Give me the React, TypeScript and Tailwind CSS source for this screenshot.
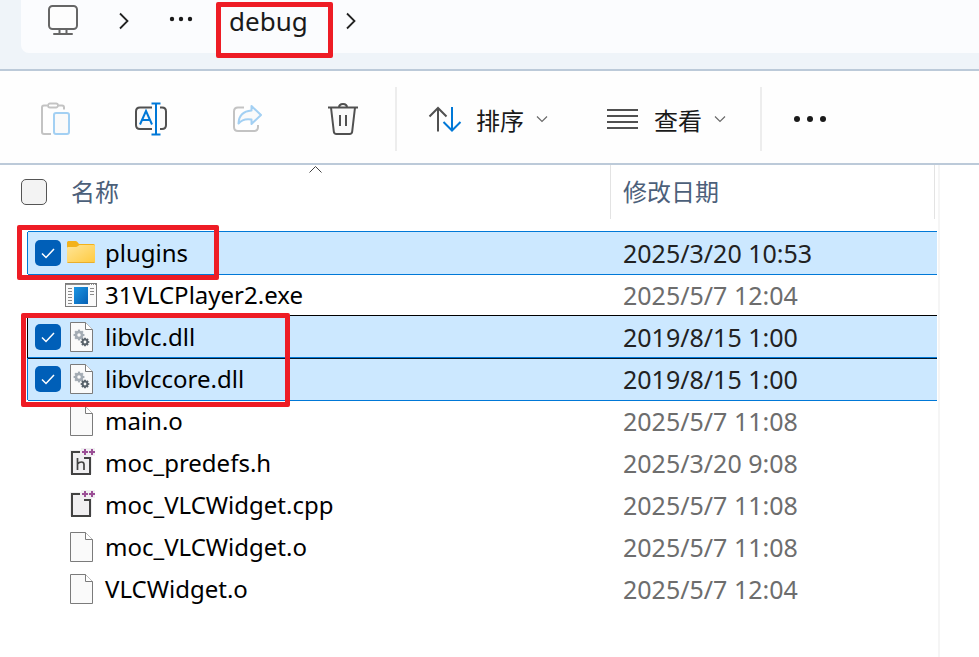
import type { ReactNode } from "react";

type IconKind = "folder" | "exe" | "dll" | "file" | "header" | "source";

interface FileRow {
  name: string;
  date: string;
  icon: IconKind;
  selected?: boolean;
  line?: string;
}

const BLUE_BOX =
  "bg-[#cce8ff] shadow-[-1px_0_0_#0078d7,0_-1px_0_#0078d7,0_1px_0_#0078d7]";
const FOCUS_BOX =
  "bg-[#cce8ff] shadow-[-1px_0_0_#000000,0_-1px_0_#000000,inset_0_-1px_0_#0078d7]";
const LAST_BOX =
  "bg-[#cce8ff] shadow-[-1px_0_0_#0078d7,inset_0_1px_0_#00192d,0_1px_0_#0078d7]";

const files: FileRow[] = [
  { name: "plugins", date: "2025/3/20 10:53", icon: "folder", selected: true, line: BLUE_BOX },
  { name: "31VLCPlayer2.exe", date: "2025/5/7 12:04", icon: "exe" },
  { name: "libvlc.dll", date: "2019/8/15 1:00", icon: "dll", selected: true, line: FOCUS_BOX },
  { name: "libvlccore.dll", date: "2019/8/15 1:00", icon: "dll", selected: true, line: LAST_BOX },
  { name: "main.o", date: "2025/5/7 11:08", icon: "file" },
  { name: "moc_predefs.h", date: "2025/3/20 9:08", icon: "header" },
  { name: "moc_VLCWidget.cpp", date: "2025/5/7 11:08", icon: "source" },
  { name: "moc_VLCWidget.o", date: "2025/5/7 11:08", icon: "file" },
  { name: "VLCWidget.o", date: "2025/5/7 12:04", icon: "file" },
];

function Svg({ w, h, children }: { w: number; h: number; children: ReactNode }) {
  return (
    <svg width={w} height={h} viewBox={`0 0 ${w} ${h}`} fill="none" className="shrink-0" aria-hidden="true">
      {children}
    </svg>
  );
}

function Gear({ x, y, r, color }: { x: number; y: number; r: number; color: string }) {
  return (
    <g transform={`translate(${x} ${y})`} stroke={color}>
      <circle r={r * 0.6} strokeWidth={r * 0.5} />
      {[0, 45, 90, 135, 180, 225, 270, 315].map((a) => (
        <path key={a} d={`M0 ${-r * 0.7}V${-r * 1.08}`} strokeWidth={r * 0.45} transform={`rotate(${a})`} />
      ))}
    </g>
  );
}

function Sheet() {
  return (
    <>
      <path d="M5.5 1.5H20.5L27.5 8.5V30.5H5.5Z" fill="#fafafa" stroke="#7b7b7b" />
      <path d="M20.5 1.5V8.5H27.5" fill="#ffffff" stroke="#7b7b7b" />
    </>
  );
}

function FileIcon({ kind }: { kind: IconKind }) {
  switch (kind) {
    case "folder":
      return (
        <Svg w={32} h={32}>
          <defs>
            <linearGradient id="folder-face" x1="0" y1="0" x2="1" y2="1">
              <stop offset="0" stopColor="#ffe598" />
              <stop offset="1" stopColor="#ffca3f" />
            </linearGradient>
          </defs>
          <path d="M2 5.5Q2 4 3.500 4H10.500Q11.500 4 12.200 4.800L14 7H28.500Q30 7 30 8.500V20H2Z" fill="#f3b21b" />
          <path d="M2 11Q2 10 3 10H11Q12 10 13 9L14.500 8H29Q30 8 30 9V24.500Q30 26 28.500 26H3.500Q2 26 2 24.500Z" fill="url(#folder-face)" />
          <path d="M2.500 25.500H29.500" stroke="#e9ae2c" />
        </Svg>
      );
    case "exe":
      return (
        <Svg w={32} h={32}>
          <defs>
            <linearGradient id="exe-face" x1="0" y1="0" x2="1" y2="1">
              <stop offset="0" stopColor="#1b96e4" />
              <stop offset="1" stopColor="#0660b4" />
            </linearGradient>
          </defs>
          <rect x="0.5" y="4.500" width="31" height="23" fill="#fafafa" stroke="#7b7b7b" />
          <path d="M1 5.500H31" stroke="#8b8b8b" />
          <path d="M25 5.500H30" stroke="#ffffff" strokeDasharray="1 1" />
          <rect x="9" y="8" width="14" height="17" fill="url(#exe-face)" />
          <path d="M3 9.500H7M3 12.500H7M3 15.500H7M3 18.500H7M3 21.500H7M3 24.500H7M25 9.500H29M25 12.500H29M25 15.500H29" stroke="#8b8b8b" />
        </Svg>
      );
    case "dll":
      return (
        <Svg w={32} h={32}>
          <Sheet />
          <Gear x={14} y={14} r={5} color="#a3abb3" />
          <Gear x={20} y={21} r={4} color="#59636b" />
        </Svg>
      );
    case "file":
      return (
        <Svg w={32} h={32}>
          <Sheet />
        </Svg>
      );
    default:
      return (
        <Svg w={32} h={32}>
          <path d="M5 3H16V1H30V9H27V27H5Z" fill="#f0eff1" />
          <path d="M15 5H7V27H25V11H19" stroke="#424242" strokeWidth="2" />
          {kind === "header" && (
            <path d="M12.500 11V23M12.500 17Q14 15 16.500 15Q19 15 19 17.500V23" stroke="#424242" strokeWidth="1.700" />
          )}
          <path d="M17 5H23M20 2V8M24 5H30M27 2V8" stroke="#9b4f96" strokeWidth="2" />
        </Svg>
      );
  }
}

function Chevron() {
  return (
    <Svg w={12} h={8}>
      <path d="M1 1.500L6 6.500L11 1.500" stroke="#6a6a6a" strokeWidth="1.200" />
    </Svg>
  );
}

function Crumb() {
  return (
    <Svg w={10} h={18}>
      <path d="M1 1.500L8.500 9L1 16.500" stroke="#222222" strokeWidth="1.800" />
    </Svg>
  );
}

function AddressBar() {
  return (
    <header className="border-b-2 border-[#bccad9] bg-[#eff4f9] pb-4 pl-[21px]">
      <nav aria-label="路径" className="flex h-[53px] items-start rounded-bl-lg bg-[#fbfcfe] pl-[26px]">
        <div className="flex h-[42px] items-center">
          <button aria-label="此电脑">
            <Svg w={32} h={34}>
              <rect x="2" y="2" width="28" height="23" rx="3.500" fill="#fdfdfd" stroke="#666666" strokeWidth="2" />
              <path d="M12.500 25V29M19.500 25V29M7 30H25" stroke="#666666" strokeWidth="2" strokeLinecap="round" />
            </Svg>
          </button>
          <button aria-label="展开此电脑" className="ml-10">
            <Crumb />
          </button>
          <button aria-label="更多路径" className="ml-10 pb-1">
            <Svg w={26} h={6}>
              <circle cx="3" cy="3" r="2.200" fill="#1a1a1a" />
              <circle cx="12" cy="3" r="2.200" fill="#1a1a1a" />
              <circle cx="21" cy="3" r="2.200" fill="#1a1a1a" />
            </Svg>
          </button>
          <div className="relative ml-[34px]">
            <button className="block text-[26px] leading-8 text-[#1a1a1a]">debug</button>
            <span className="pointer-events-none absolute -left-[13px] -top-[3px] h-14 w-[117px] rounded-[2px] border-[5px] border-[#ee1c25]" />
          </div>
          <button aria-label="展开 debug" className="ml-[38px]">
            <Crumb />
          </button>
        </div>
      </nav>
    </header>
  );
}

function MenuButton({ label, children }: { label: string; children: ReactNode }) {
  return (
    <button className="flex items-center">
      {children}
      <span className="ml-[14px] pt-[3px]">{label}</span>
      <span className="ml-3">
        <Chevron />
      </span>
    </button>
  );
}

function Toolbar() {
  return (
    <div role="toolbar" className="flex h-[94px] items-center border-b-2 border-[#bccad9] bg-[#fefefe] pl-[39px] pt-1 text-2xl text-[#1a1a1a]">
      <div className="flex gap-16">
        <button aria-label="粘贴" disabled>
          <Svg w={32} h={36}>
            <path d="M8.500 4.500H5Q3 4.500 3 6.500V31Q3 33 5 33H12" stroke="#c3c3c3" strokeWidth="2" />
            <path d="M19 4.500H23Q25 4.500 25 6.500V8.500" stroke="#c3c3c3" strokeWidth="2" />
            <rect x="9" y="2.500" width="10" height="4" rx="2" stroke="#c3c3c3" strokeWidth="1.800" />
            <rect x="15" y="12" width="15" height="21" rx="2" fill="#fafafa" stroke="#a3d0f3" strokeWidth="2" />
          </Svg>
        </button>
        <button aria-label="重命名">
          <Svg w={32} h={36}>
            <path d="M17 6.500H5Q1 6.500 1 10.500V24Q1 28 5 28H17M25 6.500H27Q31 6.500 31 10.500V24Q31 28 27 28H25" fill="#fafafa" stroke="#505050" strokeWidth="2" />
            <path d="M5 23.500L11 10L17 23.500M7 19H15" stroke="#0078d7" strokeWidth="2" />
            <path d="M21 2.500V33.500M16.500 2.500H25.500M16.500 33.500H25.500" stroke="#0078d7" strokeWidth="2" />
          </Svg>
        </button>
        <button aria-label="共享" disabled>
          <Svg w={32} h={36}>
            <path d="M13 6.500H7Q3 6.500 3 10.500V26Q3 30 7 30H23Q27 30 27 26V24" stroke="#c3c3c3" strokeWidth="2" />
            <path d="M20.500 5L30 14L20.500 23V18.500Q12 17 7.500 22.500Q8 10.500 20.500 9.500Z" fill="#fafafa" stroke="#a3d0f3" strokeWidth="2" strokeLinejoin="round" />
          </Svg>
        </button>
        <button aria-label="删除">
          <Svg w={32} h={36}>
            <path d="M4 6.500L6.800 30.500Q7 33 9.500 33H22.500Q25 33 25.200 30.500L28 6.500" fill="#fafafa" stroke="#505050" strokeWidth="2" />
            <path d="M1 6.500H31M12 6.500Q12 3 16 3Q20 3 20 6.500M13 14V25M19 14V25" stroke="#505050" strokeWidth="2" />
          </Svg>
        </button>
      </div>
      <div className="ml-9 mr-[31px] h-16 w-[2px] bg-[#ededed]" />
      <div className="flex gap-[58px]">
        <MenuButton label="排序">
          <Svg w={34} h={26}>
            <path d="M10 25.500V2M1.500 10.500L10 2L18.500 10.500" stroke="#505050" strokeWidth="2" />
            <path d="M24 1V24.500M15.500 16L24 24.500L32.500 16" stroke="#0078d7" strokeWidth="2" />
          </Svg>
        </MenuButton>
        <MenuButton label="查看">
          <Svg w={34} h={24}>
            <path d="M1 3H32M1 9H32M1 15H32M1 21H32" stroke="#505050" strokeWidth="2" />
          </Svg>
        </MenuButton>
      </div>
      <div className="ml-[34px] h-16 w-[2px] bg-[#ededed]" />
      <button aria-label="更多" className="ml-8">
        <Svg w={34} h={8}>
          <circle cx="3" cy="4" r="3" fill="#1a1a1a" />
          <circle cx="16" cy="4" r="3" fill="#1a1a1a" />
          <circle cx="29" cy="4" r="3" fill="#1a1a1a" />
        </Svg>
      </button>
    </div>
  );
}

function Row({ file, id }: { file: FileRow; id: string }) {
  return (
    <tr className={`flex h-[42px] items-center ${file.line ?? ""}`}>
      <td className="flex min-w-0 flex-1 items-center pl-[7px]">
        <span className="grid place-items-center">
          <input
            id={id}
            type="checkbox"
            defaultChecked={file.selected}
            className="peer col-start-1 row-start-1 size-[26px] appearance-none rounded-[5px] bg-[#005fb8] opacity-0 checked:opacity-100"
          />
          <svg
            width="16"
            height="16"
            viewBox="0 0 16 16"
            fill="none"
            className="pointer-events-none col-start-1 row-start-1 opacity-0 peer-checked:opacity-100"
            aria-hidden="true"
          >
            <path d="M2 8.500L6 12.500L14 4" stroke="#ffffff" strokeWidth="1.500" />
          </svg>
        </span>
        <label htmlFor={id} className="ml-1 flex items-center gap-2 text-black">
          <FileIcon kind={file.icon} />
          {file.name}
        </label>
      </td>
      <td className={`w-[327px] pl-[13px] text-[25px] leading-8 ${file.selected ? "text-[#222222]" : "text-[#6d6d6d]"}`}>
        {file.date}
      </td>
    </tr>
  );
}

function FileList() {
  return (
    <main className="flex flex-1">
      <div className="relative flex-1">
        <table className="block text-2xl">
          <thead className="mb-[13px] block">
            <tr className="flex h-[54px] text-[#4c607a]">
              <th className="relative flex flex-1 items-center gap-6 pl-[21px] font-normal">
                <input
                  type="checkbox"
                  aria-label="全选"
                  className="size-[26px] appearance-none rounded-[5px] border border-[#555555] bg-[#f3f3f3]"
                />
                名称
                <span className="absolute left-1/2 top-0 ml-1">
                  <Svg w={14} h={9}>
                    <path d="M0.500 7.500L6.500 1.500L12.500 7.500" stroke="#444444" />
                  </Svg>
                </span>
              </th>
              <th className="mr-[2px] flex w-[325px] items-center border-x border-[#e3e3e3] pl-3 font-normal">修改日期</th>
            </tr>
          </thead>
          <tbody className="ml-7 block">
            {files.map((file, i) => (
              <Row key={file.name} file={file} id={`file-${i}`} />
            ))}
          </tbody>
        </table>
        <span className="pointer-events-none absolute left-[17px] top-[60px] h-[55px] w-[202px] rounded-[2px] border-[5px] border-[#ee1c25]" />
        <span className="pointer-events-none absolute left-[21px] top-[148px] h-[94px] w-[269px] rounded-[2px] border-[5px] border-[#ee1c25]" />
      </div>
      <aside className="ml-px w-[41px] border-l-2 border-[#f5f5f5]" />
    </main>
  );
}

export default function App() {
  return (
    <div className="flex min-h-screen flex-col bg-white font-['Noto_Sans','Noto_Sans_CJK_SC',sans-serif]">
      <AddressBar />
      <Toolbar />
      <FileList />
    </div>
  );
}
